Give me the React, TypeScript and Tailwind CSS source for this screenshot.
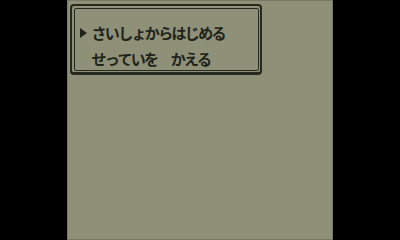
import React from "react";

export default function App() {
  const font = { fontFamily: '"Noto Sans CJK JP", "Noto Sans", sans-serif' };
  return (
    <div className="w-[400px] h-[240px] bg-black flex justify-center overflow-hidden">
      <div className="w-[266px] h-[240px] bg-[#8f9078] shadow-[inset_0_0_0_1px_#777a64]">
        <div className="ml-[3px] mt-[4px] w-[192px] h-[71px] border-2 border-[#262a1e] rounded-[4px] p-[1.5px] border-b-[3px]">
          <div className="h-full border-[1.5px] border-[#262a1e] rounded-[2px] pt-[11px] text-[#20241a] text-[15px] font-semibold tracking-[-1.67px]" style={font}>
            <div className="h-[26px] flex items-center">
              <div className="w-[17px] pl-[5.5px] flex items-center">
                <svg width="7" height="10" viewBox="0 0 7 10">
                  <path d="M0 0 L7 5 L0 10 Z" fill="#20241a" />
                </svg>
              </div>
              <span className="leading-none">さいしょからはじめる</span>
            </div>
            <div className="h-[26px] flex items-center pl-[17px]">
              <span className="leading-none">せっていを　かえる</span>
            </div>
          </div>
        </div>
      </div>
    </div>
  );
}
